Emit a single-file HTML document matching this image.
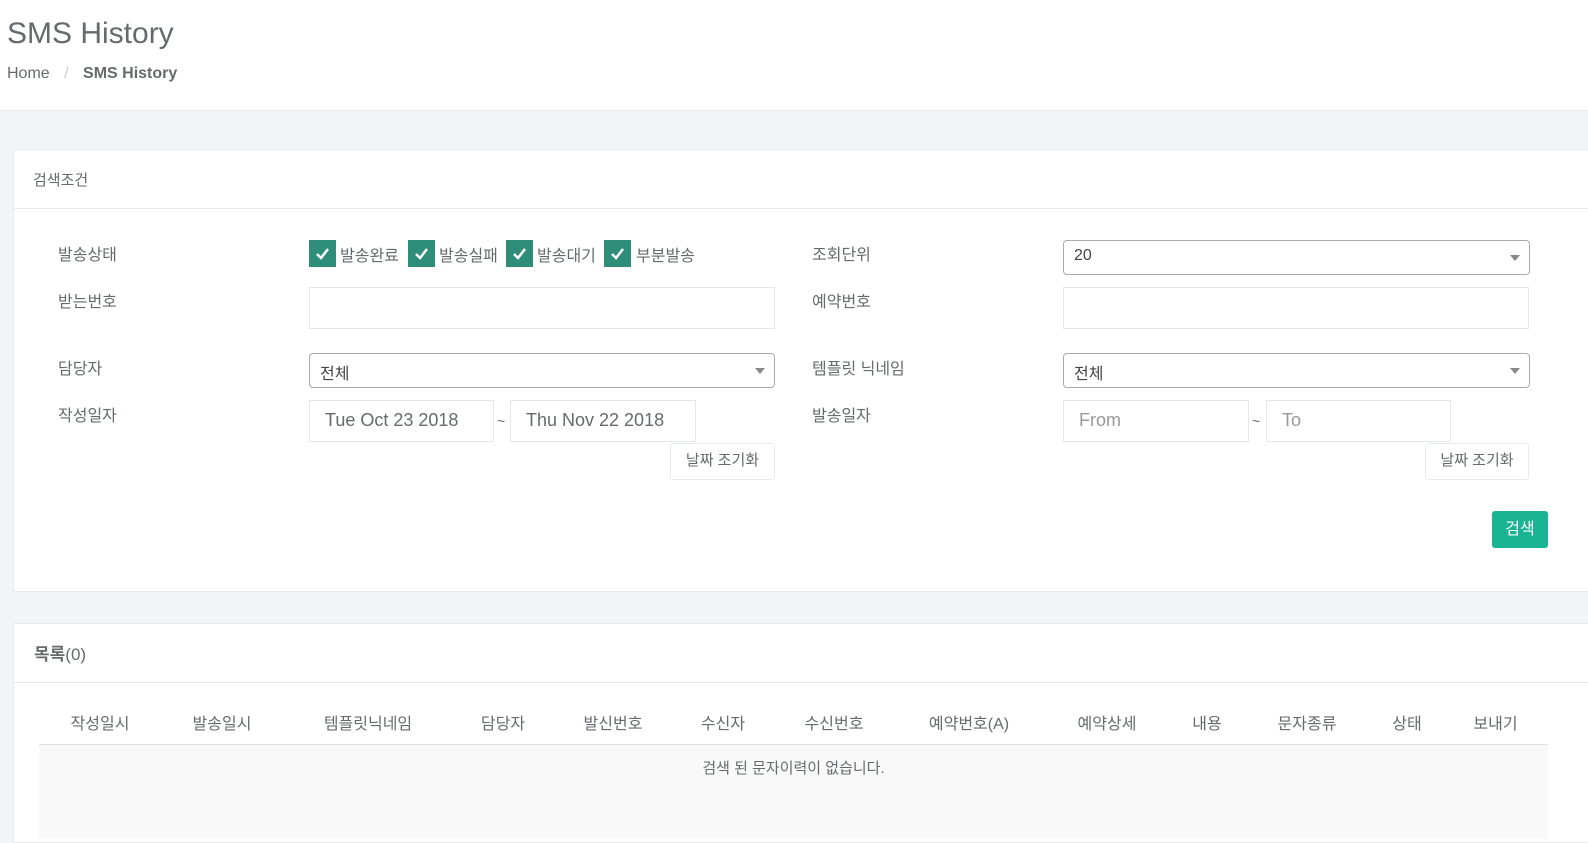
<!DOCTYPE html>
<html><head><meta charset="utf-8"><style>
*{box-sizing:border-box;margin:0;padding:0}
body{width:1588px;height:838px;overflow:hidden;background:#f3f4f8;font-family:"Liberation Sans","Noto Sans CJK KR",sans-serif;color:#676a6c;font-size:14px;position:relative}
.a{position:absolute}
.hdr{left:0;top:0;width:1588px;height:111px;background:#fff;border-bottom:1px solid #e7eaec}
.panel{background:#fff;border:1px solid #e7eaec;border-right:none}
.lbl{font-size:16px;color:#676a6c}
.inp{background:#fff;border:1px solid #e5e6e7;height:42px;font-size:18px;color:#676a6c;padding:9px 15px}
.sel{background:#fff;border:1px solid #aaa;border-radius:4px;height:35px;font-size:16px;color:#444;padding:6px 10px}
.sel:after{content:"";position:absolute;right:9px;top:14px;border:5px solid transparent;border-top:6px solid #888}
.cb{width:27px;height:27px;background:#2f8e79}
.cb svg{position:absolute;left:6px;top:7px}
.btn{background:#fff;border:1px solid #e7eaec;border-radius:3px;font-size:15px;color:#676a6c;text-align:center;line-height:34px}
th{font-weight:normal}
</style></head><body>
<div class="a hdr">
<div class="a" style="left:7px;top:17px;font-size:30px;color:#676a6c">SMS History</div>
<div class="a" style="left:7px;top:65px;font-size:16px">Home <span style="color:#ccc;margin:0 10px">/</span> <b>SMS History</b></div>
</div>

<div class="a panel" style="left:13px;top:149px;width:1575px;height:443px">
<div class="a" style="left:0;top:0;width:1575px;height:59px;border-bottom:1px solid #e7eaec"></div>
<div class="a" style="left:19px;top:19px;font-size:15px">검색조건</div>
</div>
<div class="a lbl" style="left:58px;top:241px">발송상태</div>
<div class="a lbl" style="left:58px;top:288px">받는번호</div>
<div class="a lbl" style="left:58px;top:355px">담당자</div>
<div class="a lbl" style="left:58px;top:402px">작성일자</div>
<div class="a lbl" style="left:812px;top:241px">조회단위</div>
<div class="a lbl" style="left:812px;top:288px">예약번호</div>
<div class="a lbl" style="left:812px;top:355px">템플릿 닉네임</div>
<div class="a lbl" style="left:812px;top:402px">발송일자</div>

<div class="a cb" style="left:309px;top:240px"><svg width="15" height="13" viewBox="0 0 15 13"><path d="M2 7l4 4 7-9" stroke="#fff" stroke-width="2.5" fill="none"/></svg></div>
<div class="a lbl" style="left:340px;top:242px">발송완료</div>
<div class="a cb" style="left:408px;top:240px"><svg width="15" height="13" viewBox="0 0 15 13"><path d="M2 7l4 4 7-9" stroke="#fff" stroke-width="2.5" fill="none"/></svg></div>
<div class="a lbl" style="left:439px;top:242px">발송실패</div>
<div class="a cb" style="left:506px;top:240px"><svg width="15" height="13" viewBox="0 0 15 13"><path d="M2 7l4 4 7-9" stroke="#fff" stroke-width="2.5" fill="none"/></svg></div>
<div class="a lbl" style="left:537px;top:242px">발송대기</div>
<div class="a cb" style="left:604px;top:240px"><svg width="15" height="13" viewBox="0 0 15 13"><path d="M2 7l4 4 7-9" stroke="#fff" stroke-width="2.5" fill="none"/></svg></div>
<div class="a lbl" style="left:636px;top:242px">부분발송</div>

<div class="a sel" style="left:1063px;top:240px;width:467px">20</div>
<div class="a inp" style="left:309px;top:287px;width:466px"></div>
<div class="a inp" style="left:1063px;top:287px;width:466px"></div>
<div class="a sel" style="left:309px;top:353px;width:466px">전체</div>
<div class="a sel" style="left:1063px;top:353px;width:467px">전체</div>

<div class="a inp" style="left:309px;top:400px;width:185px">Tue Oct 23 2018</div>
<div class="a" style="left:497px;top:413px">~</div>
<div class="a inp" style="left:510px;top:400px;width:186px">Thu Nov 22 2018</div>
<div class="a btn" style="left:670px;top:443px;width:105px;height:37px">날짜 조기화</div>

<div class="a inp" style="left:1063px;top:400px;width:186px;color:#999">From</div>
<div class="a" style="left:1252px;top:413px">~</div>
<div class="a inp" style="left:1266px;top:400px;width:185px;color:#999">To</div>
<div class="a btn" style="left:1425px;top:443px;width:104px;height:37px">날짜 조기화</div>

<div class="a" style="left:1492px;top:511px;width:56px;height:37px;background:#1ab394;border-radius:3px;color:#fff;text-align:center;line-height:37px;font-size:16px">검색</div>

<div class="a panel" style="left:13px;top:623px;width:1575px;height:220px">
<div class="a" style="left:0;top:0;width:1575px;height:59px;border-bottom:1px solid #e7eaec"></div>
<div class="a" style="left:20px;top:16px;font-size:17px;font-weight:bold">목록<span style="font-weight:normal">(0)</span></div>
</div>
<table class="a" style="left:39px;top:700px;width:1509px;border-collapse:collapse;font-size:16px;color:#676a6c">
<tr style="height:44px;border-bottom:1px solid #e0e0e0">
<th style="width:122px">작성일시</th><th style="width:122px">발송일시</th><th style="width:170px">템플릿닉네임</th><th style="width:100px">담당자</th><th style="width:120px">발신번호</th><th style="width:100px">수신자</th><th style="width:122px">수신번호</th><th style="width:148px">예약번호(A)</th><th style="width:128px">예약상세</th><th style="width:72px">내용</th><th style="width:128px">문자종류</th><th style="width:72px">상태</th><th>보내기</th></tr>
<tr style="background:#f9f9f9;height:95px;vertical-align:top"><td colspan="13" style="text-align:center;padding-top:12px;font-size:15px">검색 된 문자이력이 없습니다.</td></tr>
</table>
</body></html>
